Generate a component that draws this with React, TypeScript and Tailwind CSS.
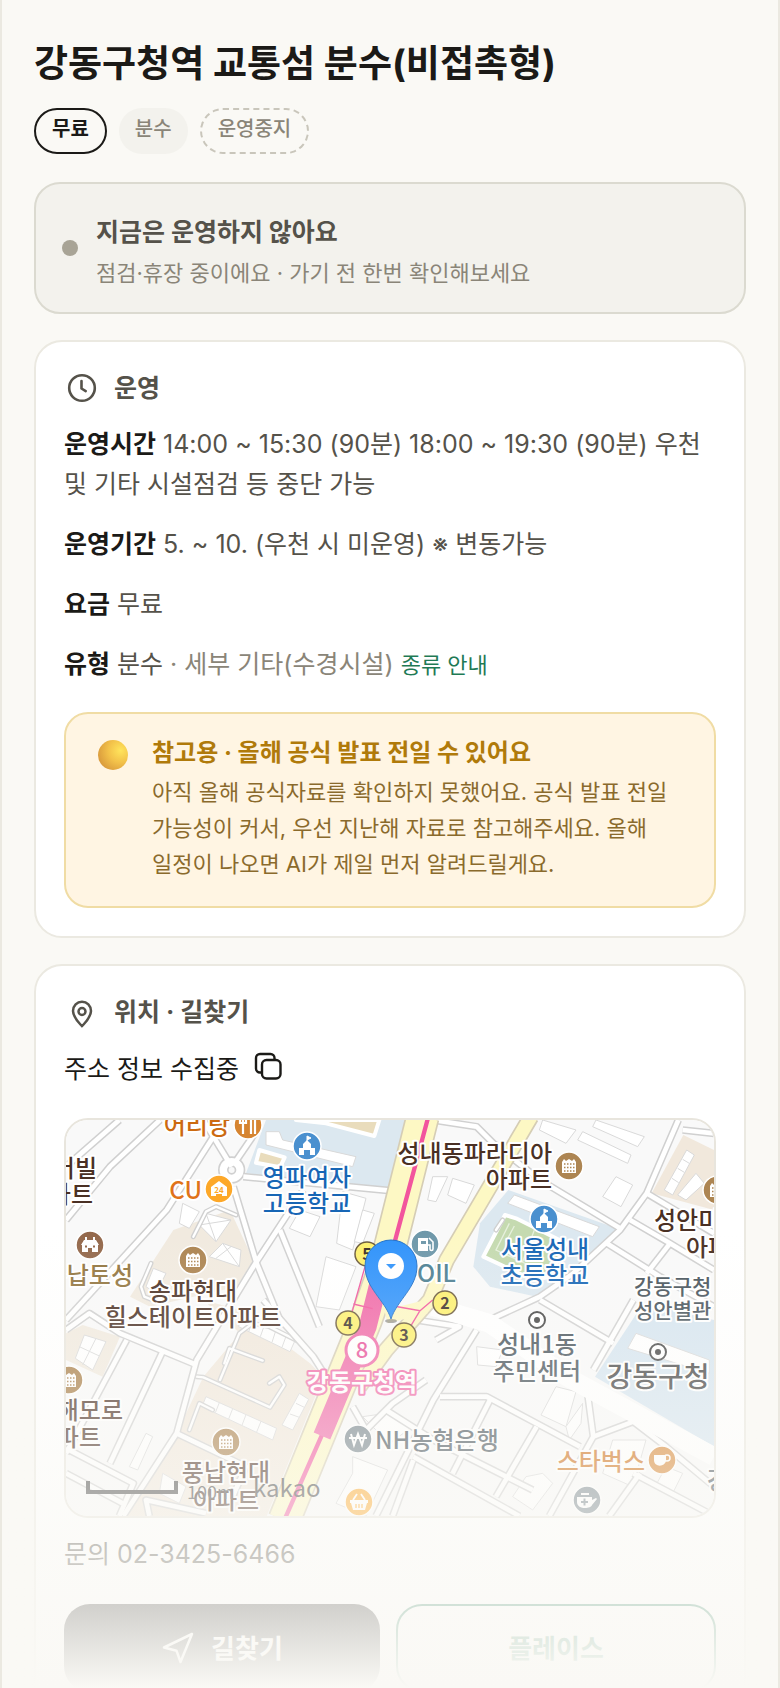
import { ReactNode } from 'react';
import { cva } from 'class-variance-authority';

const FONT = "font-['Inter','Noto_Sans_CJK_KR',sans-serif]";

const chip = cva('flex h-[46px] items-center rounded-full pb-1 text-xl', {
  variants: {
    tone: {
      strong: 'border-2 border-[#1b1a17] px-4 font-bold text-[#1b1a17]',
      soft: 'bg-[#f3f2ed] px-4 font-medium text-[#8a8578]',
      dashed: 'border-2 border-dashed border-[#c9c6bb] px-4 font-medium text-[#8a8578]',
    },
  },
});

function ClockIcon() {
  return (
    <svg viewBox="0 0 36 36" className="size-9" fill="none" stroke="currentColor" strokeWidth="2.6" strokeLinecap="round" strokeLinejoin="round">
      <circle cx="18" cy="18" r="12.8" />
      <path d="M17.5 11v7.5l4.2 2.6" />
    </svg>
  );
}

function PinIcon() {
  return (
    <svg viewBox="0 0 36 36" className="size-9" fill="none" stroke="currentColor" strokeWidth="2.5" strokeLinejoin="round">
      <path d="M18 32.2c-3.400-3.800-9-9-9-15.200a9 9.300 0 0 1 18 0c0 6.200-5.600 11.400-9 15.200z" />
      <circle cx="18" cy="17.500" r="3.500" />
    </svg>
  );
}

function CopyIcon() {
  return (
    <svg viewBox="0 0 32 32" className="size-8" fill="none" stroke="currentColor" strokeWidth="2.4" strokeLinejoin="round">
      <rect x="9" y="9" width="18.500" height="18.500" rx="4.500" />
      <path d="M9 21.500H7A4 4 0 0 1 3 17.500V7a4 4 0 0 1 4-4h10.500a4 4 0 0 1 4 4v2" />
    </svg>
  );
}

function SendIcon() {
  return (
    <svg viewBox="0 0 34 34" className="size-[34px]" fill="none" stroke="currentColor" strokeWidth="2.5" strokeLinejoin="round">
      <path d="M31 3 3 16.500l12.500 3.200L19.500 31z" />
    </svg>
  );
}

function SectionTitle({ icon, children }: { icon: ReactNode; children: ReactNode }) {
  return (
    <h2 className="flex h-9 items-center gap-3.5 text-[25px] font-bold leading-9 text-[#55524a]">
      {icon}
      {children}
    </h2>
  );
}

function Row({ label, children }: { label: string; children: ReactNode }) {
  return (
    <p className="text-[25px] leading-10 text-[#55524a]">
      <strong className="font-bold text-[#1b1a17]">{label}</strong> {children}
    </p>
  );
}

const BROWN = '#4a3024';
const BLUE = '#1766b5';
const SLATE = '#46525a';
const ORANGE = '#cc6a10';

// Geometry below is drawn on a 1944x1188 grid, three units to a pixel.
const AREAS: { d: string; fill: string; stroke?: string }[] = [
  { d: 'M600 0H1045L975 205L540 160Z', fill: '#dce8f0' },
  { d: 'M690 0H940L925 48L780 10Z', fill: '#e9dcbc', stroke: '#fff' },
  { d: 'M580 90L656 112L642 142L570 128Z', fill: '#e9dcbc', stroke: '#fff' },
  { d: 'M322 330L492 270L562 420L512 500L252 560L192 530Z', fill: '#f1eadf' },
  { d: 'M50 615L162 650L110 770L0 720V640Z', fill: '#f1eadf' },
  { d: 'M412 540L522 570L732 730L772 770L602 1188H172L332 940L412 770L522 640Z', fill: '#f1e8dc' },
  { d: 'M1327 210L1652 325L1532 460L1412 530L1272 500L1222 440L1242 310Z', fill: '#dce8f0' },
  { d: 'M1317 285L1350 295L1500 370L1452 470L1402 480L1252 410Z', fill: '#c5dab0', stroke: '#fff' },
  { d: 'M1852 45L1944 90V270L1757 220Z', fill: '#f1e8dc' },
  { d: 'M1732 550L1944 600V980L1587 770Z', fill: '#d6e5f0' },
];

const ROADS = [
  'M282 0L132 140L0 300', 'M442 50L302 270L0 600', 'M160 0L0 140',
  'M412 0L497 140', 'M580 20L512 120', 'M532 170L972 212',
  'M502 200L572 430L650 620', 'M712 210L562 440L392 720L332 940L172 1188',
  'M642 330L760 620', 'M592 540L742 710L780 770', 'M0 630L70 580L162 640L392 735',
  'M182 660L0 1000', 'M292 690L132 1030', 'M0 985L202 1090L160 1188', 'M0 1060L170 1150',
  'M332 940L540 1040L500 1130', 'M250 1188L240 1140L420 1180',
  'M1100 0L1232 20L1282 70L1422 180L1662 325',
  'M1837 0L1742 220L1662 330L1522 460L1422 530L1270 600', 'M1850 30L1944 40',
  'M1742 220L1944 340', 'M1692 300L1812 370L1944 450', 'M1812 370L1742 460',
  'M1622 370L1782 470L1944 560', 'M1422 540L1642 670', 'M1702 540L1582 750',
  'M1232 630L1102 840L930 1188', 'M1122 830L1262 830L1542 980',
  'M1562 800L1582 950L1450 1188', 'M1272 840L1160 1060', 'M1412 920L1290 1130',
  'M960 870L1102 960L1400 1110', 'M1042 1010L1360 1188', 'M1042 1020L980 1188',
  'M1582 950L1702 905L1800 980L1944 1100', 'M1702 1060L1944 1188', 'M1722 1060L1630 1188',
  'M860 860L900 930L980 850L1080 780', 'M1050 600L1180 620L1110 660',
];

// Driveways inside the apartment blocks
const LANES = [
  'M392 770L412 772L612 862L655 795L640 770L610 790', 'M462 780L520 640L560 610L610 620L700 665',
  'M610 610L620 575', 'M475 730L490 685L590 722', 'M382 350L420 275L450 260L510 285',
  'M255 430L225 500L235 530L260 540', 'M370 930L400 850L440 870', 'M1290 330L1310 300',
];

const BUILDINGS = [
  'M600 35L640 35L650 60L870 110L860 140L600 75Z', 'M702 270L762 290L732 350L670 325Z',
  'M830 215L900 235L860 390L812 370Z', 'M890 270L925 280L890 370L865 365Z',
  'M780 410L870 440L820 570L750 560Z', 'M350 250L400 275L370 325L340 310Z',
  'M420 280L495 300L450 365L400 315ZM420 280L450 365M400 315L495 300',
  'M470 370L525 390L520 440L430 410ZM470 370L520 440M495 380L450 415',
  'M262 445L300 460L270 520L240 500Z',
  'M55 645L120 665L80 750L28 715ZM90 655L50 735M40 680L100 708',
  'M525 588L690 655L672 695L518 620ZM560 602L548 635M595 616L583 650M630 630L618 667M662 644L648 682',
  'M420 830L632 925L620 960L408 860ZM460 848L448 878M500 866L488 897M540 884L528 916M585 904L572 936',
  'M700 820L728 838L680 930L648 915ZM690 850L715 862M672 882L700 892',
  'M240 940L260 950L215 1050L190 1040Z', 'M290 1060L360 1100L340 1150L280 1120Z',
  'M860 1010L965 1050L900 1188L810 1150L860 1060Z', 'M890 890L960 880L1040 920L970 970Z',
  'M1430 0L1530 30L1500 70L1420 30Z', 'M1590 0L1735 50L1715 80L1580 20Z',
  'M1550 35L1695 105L1685 130L1535 60Z', 'M1650 170L1700 195L1665 260L1610 230Z',
  'M1160 175L1225 195L1200 250L1145 225Z', 'M1100 170L1145 170L1110 245L1085 240Z',
  'M1345 225L1600 320L1580 350L1325 250Z',
  'M1862 90L1885 105L1820 225L1795 210ZM1850 118L1870 130M1835 145L1855 157M1818 175L1838 188',
  'M1890 160L1915 190L1860 240L1835 225Z', 'M1710 640L1930 720V760L1685 685Z',
  'M1232 680L1310 690L1290 740L1235 735Z', 'M1470 800L1530 815L1500 920L1425 885Z',
  'M1550 850L1545 910L1510 960L1500 920Z', 'M1380 1070L1430 1060L1460 1090L1400 1170L1340 1130Z',
  'M1640 960L1740 960L1700 1100L1610 1060Z', 'M1800 1040L1850 1060L1820 1120L1770 1095Z',
];

const LABELS: { x: number; y: number; text: string; fill: string; anchor?: 'end' | 'start'; size?: number }[] = [
  { x: 164, y: 14, text: '어리랑', fill: ORANGE, anchor: 'end' },
  { x: 241, y: 66, text: '영파여자', fill: BLUE },
  { x: 241, y: 92, text: '고등학교', fill: BLUE },
  { x: 31, y: 57, text: '어빌', fill: BROWN, anchor: 'end' },
  { x: 27, y: 83, text: '파트', fill: BROWN, anchor: 'end' },
  { x: 136, y: 79, text: 'CU', fill: '#e0731a', anchor: 'end' },
  { x: 67, y: 164, text: '풍납토성', fill: '#92753f', anchor: 'end' },
  { x: 127, y: 180, text: '송파현대', fill: BROWN },
  { x: 127, y: 206, text: '힐스테이트아파트', fill: BROWN },
  { x: 486, y: 42, text: '성내동파라디아', fill: BROWN, anchor: 'end' },
  { x: 486, y: 68, text: '아파트', fill: BROWN, anchor: 'end' },
  { x: 479, y: 138, text: '서울성내', fill: BLUE },
  { x: 479, y: 164, text: '초등학교', fill: BLUE },
  { x: 588, y: 109, text: '성안미래', fill: BROWN, anchor: 'start' },
  { x: 620, y: 136, text: '아파트', fill: BROWN, anchor: 'start' },
  { x: 390, y: 162, text: 'S-OIL', fill: '#4c7f92', anchor: 'end' },
  { x: 568, y: 174, text: '강동구청', fill: SLATE, anchor: 'start', size: 21 },
  { x: 568, y: 198, text: '성안별관', fill: SLATE, anchor: 'start', size: 21 },
  { x: 471, y: 233, text: '성내1동', fill: SLATE },
  { x: 471, y: 260, text: '주민센터', fill: SLATE },
  { x: 592, y: 267, text: '강동구청', fill: '#444', size: 28 },
  { x: 309, y: 329, text: 'NH농협은행', fill: SLATE, anchor: 'start' },
  { x: 579, y: 350, text: '스타벅스', fill: ORANGE, anchor: 'end' },
  { x: 57, y: 299, text: '해모로', fill: BROWN, anchor: 'end' },
  { x: 35, y: 326, text: '아파트', fill: BROWN, anchor: 'end' },
  { x: 160, y: 361, text: '풍납현대', fill: BROWN },
  { x: 160, y: 389, text: '아파트', fill: BROWN },
  { x: 641, y: 369, text: '강', fill: SLATE, anchor: 'start' },
];

const GLYPHS: Record<string, ReactNode> = {
  apt: (
    <>
      <path d="M-7 7V-4l2-3 2 2 3-2 3 2 2-2 2 3V7z" fill="#fff" />
      <path d="M-5-2H6M-5 1.500H6M-5 5H6" stroke="currentColor" strokeWidth="1.500" strokeDasharray="1.500 1.500" />
    </>
  ),
  school: (
    <>
      <path d="M-8 9V2h4v-4l4-4 4 4v4h4v7H3V4h-6v5z" fill="#fff" />
      <path d="M0-5v-5l4 2-4 2" fill="#fff" stroke="#fff" />
    </>
  ),
  fork: <path d="M-5-8v17M-8-8v6h6v-6M3-8v17M7-8v17" stroke="#fff" strokeWidth="2.200" fill="none" />,
  store: (
    <>
      <path d="M-8 7V-2l8-6 8 6v9H3V5h-6v2z" fill="#fff" />
      <text y="4" textAnchor="middle" fontSize="8" fontWeight="700" fill="currentColor">24</text>
    </>
  ),
  fort: (
    <>
      <path d="M-8 7V0h-1l3-5h12l3 5H8v7H2V3h-4v4zM-5-8h2v3h-2zM3-8h2v3H3z" fill="#fff" />
      <path d="M-5 1.500H-3M3 1.500H5" stroke="currentColor" strokeWidth="2" />
    </>
  ),
  gas: (
    <>
      <path d="M-7-6H3V7H-7z" fill="#fff" />
      <path d="M-4-3H1V0h-5z" fill="currentColor" />
      <path d="M4-6l4 4v7c0 2-3 2-3 0V1H3" stroke="#fff" strokeWidth="1.600" fill="none" />
    </>
  ),
  won: <path d="M-7-5l3 11 4-11 4 11 3-11M-9-1H9" stroke="#fff" strokeWidth="2" fill="none" />,
  cup: (
    <>
      <path d="M-8-5H4v5c0 7-12 8-12 0z" fill="#fff" />
      <circle cx="5" cy="-2" r="3" stroke="#fff" strokeWidth="1.500" fill="none" />
    </>
  ),
  basket: (
    <>
      <path d="M-9-2H9V1H8L6 8H-6L-8 1h-1z" fill="#fff" />
      <path d="M-6-2l4-6M6-2l-4-6" stroke="#fff" strokeWidth="1.800" />
      <path d="M-3 2v4M0 2v4M3 2v4" stroke="currentColor" strokeWidth="1.300" />
    </>
  ),
  pot: (
    <>
      <path d="M-10-3H5V0l4-2 1 1-5 6C4 9-10 10-10 2zM-6-7H2v2h-8z" fill="#fff" />
      <path d="M-6 2h7M-2.500-1.500v7" stroke="currentColor" strokeWidth="2" />
    </>
  ),
};

const MARKERS = [
  { x: 182, y: 5, color: '#d68430', glyph: 'fork' },
  { x: 241, y: 26, color: '#4a90cf', glyph: 'school' },
  { x: 153, y: 69, color: '#fda829', glyph: 'store' },
  { x: 24, y: 125, color: '#94694c', glyph: 'fort' },
  { x: 127, y: 140, color: '#ad8552', glyph: 'apt' },
  { x: 503, y: 46, color: '#ad8552', glyph: 'apt' },
  { x: 651, y: 70, color: '#ad8552', glyph: 'apt' },
  { x: 478, y: 99, color: '#4a90cf', glyph: 'school' },
  { x: 359, y: 124, color: '#6f98aa', glyph: 'gas' },
  { x: 3, y: 260, color: '#a87e48', glyph: 'apt' },
  { x: 160, y: 322, color: '#a87e48', glyph: 'apt' },
  { x: 292, y: 319, color: '#76848c', glyph: 'won' },
  { x: 596, y: 340, color: '#d68430', glyph: 'cup' },
  { x: 293, y: 382, color: '#fda829', glyph: 'basket' },
  { x: 521, y: 380, color: '#76848c', glyph: 'pot' },
];

const EXITS = [
  { n: 5, x: 301, y: 134 },
  { n: 4, x: 282, y: 203 },
  { n: 3, x: 338, y: 215 },
  { n: 2, x: 379, y: 183 },
];

function StationMap() {
  return (
    <svg
      viewBox="0 0 648 396"
      preserveAspectRatio="xMidYMid slice"
      className="size-full font-['Noto_Sans_CJK_KR',sans-serif]"
      role="img"
      aria-label="강동구청역 주변 지도"
    >
      <rect width="648" height="396" fill="#f9f9f9" />
      <g transform="scale(0.33333)" fill="none">
        {AREAS.map((a) => (
          <path key={a.d} d={a.d} fill={a.fill} stroke={a.stroke} strokeWidth="12" strokeLinejoin="round" />
        ))}
        <path d="M1330 310L1290 390L1420 450M1405 330L1370 425M1345 318L1320 365L1350 380" stroke="#e6f0dc" strokeWidth="4" />
        {BUILDINGS.map((d) => (
          <path key={d} d={d} fill="#fff" stroke="#d9d9d9" strokeWidth="3" />
        ))}
        <g stroke="#d0d0d0" strokeWidth="15" strokeLinecap="round" strokeLinejoin="round">
          {LANES.map((d) => <path key={d} d={d} />)}
        </g>
        <g stroke="#fff" strokeWidth="7" strokeLinecap="round" strokeLinejoin="round">
          {LANES.map((d) => <path key={d} d={d} />)}
        </g>
        <g stroke="#d0d0d0" strokeWidth="23" strokeLinejoin="round">
          {ROADS.map((d) => <path key={d} d={d} />)}
          <circle cx="497" cy="150" r="25" strokeWidth="32" />
        </g>
        <g stroke="#fff" strokeWidth="14" strokeLinejoin="round">
          {ROADS.map((d) => <path key={d} d={d} />)}
          <circle cx="497" cy="150" r="25" strokeWidth="22" />
        </g>
        <path d="M1100 560L1270 610L1502 770L1944 1010" stroke="#fff" strokeWidth="56" />
        <path d="M1395 -10L1142 420L1092 540L960 690L880 800" stroke="#d5cdb5" strokeWidth="50" />
        <path d="M1070 -10L960 430L900 600L655 1200" stroke="#d5cdb5" strokeWidth="102" />
        <path d="M1395 -10L1142 420L1092 540L960 690L880 800" stroke="#fdf8c4" strokeWidth="40" />
        <path d="M1070 -10L960 430L900 600L655 1200" stroke="#fdf8c4" strokeWidth="92" />
        <path d="M960 590L1080 560" stroke="#fdf8c4" strokeWidth="40" />
        <path d="M1087 -10L985 370L930 520M770 940L655 1200" stroke="#f2559d" strokeWidth="13" />
        <path d="M950 440L905 620L768 948" stroke="#f06aa8" strokeWidth="54" />
        <path d="M897 440L857 580M862 552L920 566M982 558L1062 572L1100 540M1062 572L1030 625" stroke="#f2559d" strokeWidth="4" />
      </g>

      {MARKERS.map((m) => (
        <g key={`${m.x}-${m.y}`} transform={`translate(${m.x} ${m.y})`} color={m.color}>
          <circle r="14" fill="currentColor" stroke="#fff" strokeWidth="1.500" />
          {GLYPHS[m.glyph]}
        </g>
      ))}
      {[[471, 200], [592, 232]].map(([x, y]) => (
        <g key={x} transform={`translate(${x} ${y})`}>
          <circle r="8" fill="#fff" stroke="#444" strokeWidth="2" />
          <circle r="3" fill="#444" />
        </g>
      ))}
      {LABELS.map((l) => (
        <text
          key={`${l.x}-${l.y}`}
          x={l.x}
          y={l.y}
          fill={l.fill}
          fontSize={l.size ?? 24}
          fontWeight="500"
          textAnchor={l.anchor ?? 'middle'}
          stroke="#fff"
          strokeWidth="4"
          strokeLinejoin="round"
          paintOrder="stroke"
        >
          {l.text}
        </text>
      ))}

      {EXITS.map((e) => (
        <g key={e.n}>
          <circle cx={e.x} cy={e.y} r="12" fill="#fdf06e" stroke="#6b5a3c" strokeWidth="1.500" />
          <text x={e.x} y={e.y + 6} fontSize="16" fontWeight="700" textAnchor="middle" fill="#3c3028">{e.n}</text>
        </g>
      ))}
      <circle cx="296" cy="230" r="16" fill="#fff" stroke="#f06aa8" strokeWidth="3" />
      <text x="296" y="238" fontSize="22" fontWeight="500" textAnchor="middle" fill="#e8509a">8</text>
      <text x="296" y="271" fontSize="24" fontWeight="700" textAnchor="middle" fill="#fff" stroke="#f06aa8" strokeWidth="4" strokeLinejoin="round" paintOrder="stroke">
        강동구청역
      </text>

      <ellipse cx="325" cy="201" rx="6" ry="2" fill="#777" opacity="0.700" />
      <path d="M325 199C319 180 299 168 299 146a26 26 0 0 1 52 0c0 22-20 34-26 53z" fill="#3093fb" stroke="#2070c8" />
      <circle cx="325" cy="146" r="13" fill="#fff" />
      <path d="M320 144h10l-5 5z" fill="#3093fb" />

      <path d="M22 361v11h88v-11" fill="none" stroke="#444" strokeWidth="4" />
      <text x="121" y="379" fontSize="18" fill="#444">100m</text>
      <text x="187" y="377" fontSize="24" fill="#444">kakao</text>
    </svg>
  );
}

export default function App() {
  return (
    <main className={`relative h-screen overflow-hidden break-keep border-x-2 border-[#ebe9e1] bg-[#faf9f5] px-8 pt-[38px] ${FONT}`}>
      <h1 className="text-[37px] font-bold leading-[52px] text-[#1b1a17]">강동구청역 교통섬 분수(비접촉형)</h1>

      <div className="mt-[18px] flex gap-3">
        <span className={chip({ tone: 'strong' })}>무료</span>
        <span className={chip({ tone: 'soft' })}>분수</span>
        <span className={chip({ tone: 'dashed' })}>운영중지</span>
      </div>

      <section className="mt-7 flex items-center gap-[18px] rounded-[26px] border-2 border-[#dbdad0] bg-[#f3f2ed] p-[26px]">
        <span className="size-4 rounded-full bg-[#a8a496]" />
        <div>
          <p className="text-[25px] font-bold leading-[44px] text-[#55524a]">지금은 운영하지 않아요</p>
          <p className="mt-1.5 text-[22px] leading-[26px] text-[#8a8578]">점검·휴장 중이에요 · 가기 전 한번 확인해보세요</p>
        </div>
      </section>

      <section className="mt-[26px] rounded-[28px] border-2 border-[#ebe9e1] bg-white p-7">
        <SectionTitle icon={<ClockIcon />}>운영</SectionTitle>
        <div className="mt-[18px] flex flex-col gap-5">
          <Row label="운영시간">14:00 ~ 15:30 (90분) 18:00 ~ 19:30 (90분) 우천 및 기타 시설점검 등 중단 가능</Row>
          <Row label="운영기간">5. ~ 10. (우천 시 미운영) ※ 변동가능</Row>
          <Row label="요금">무료</Row>
          <Row label="유형">
            분수 <span className="text-[#8a8578]">· 세부 기타(수경시설)</span>{' '}
            <a href="#types" className="text-[22px] leading-none text-[#1f7a55]">종류 안내</a>
          </Row>
        </div>

        <div className="mt-7 flex gap-6 rounded-3xl border-2 border-[#f0dca4] bg-[#fff5e3] py-6 pl-8 pr-10">
          <span className="mt-0.5 size-[30px] shrink-0 rounded-full bg-[radial-gradient(circle_at_75%_35%,#ffe45c_0%,#f3c24a_40%,#d99a3c_80%,#d88068_100%)]" />
          <div>
            <p className="text-2xl font-bold leading-[30px] text-[#b07a0a]">참고용 · 올해 공식 발표 전일 수 있어요</p>
            <p className="mt-1.5 text-[22px] leading-9 text-[#8a6a2c]">
              아직 올해 공식자료를 확인하지 못했어요. 공식 발표 전일 가능성이 커서, 우선 지난해 자료로 참고해주세요. 올해 일정이 나오면 AI가 제일 먼저 알려드릴게요.
            </p>
          </div>
        </div>
      </section>

      <section className="mt-[26px] rounded-[28px] border-2 border-[#ebe9e1] bg-white p-7">
        <SectionTitle icon={<PinIcon />}>위치 · 길찾기</SectionTitle>
        <div className="mt-5 flex h-10 items-center gap-3.5 text-[25px] text-[#1b1a17]">
          주소 정보 수집중
          <button type="button" aria-label="주소 복사" className="mb-1.5">
            <CopyIcon />
          </button>
        </div>

        <div className="mt-7 h-[400px] overflow-hidden rounded-3xl border-2 border-[#e8e5dd]">
          <StationMap />
        </div>

        <p className="mt-4 text-[25px] leading-10 text-[#55524a]">문의 02-3425-6466</p>

        <div className="mt-[30px] flex gap-4">
          <button type="button" className="flex h-[88px] flex-1 items-center justify-center gap-4 rounded-[26px] bg-[#1b1a17] text-[26px] font-bold text-white">
            <SendIcon />
            길찾기
          </button>
          <button type="button" className="h-[88px] flex-1 rounded-[26px] border-2 border-[#1f7a55] text-[26px] font-bold text-[#1f7a55]">
            플레이스
          </button>
        </div>
      </section>

      <div className="pointer-events-none absolute inset-x-0 bottom-0 h-[27%] bg-linear-to-b from-[#faf9f5]/0 to-[#faf9f5]" />
    </main>
  );
}
